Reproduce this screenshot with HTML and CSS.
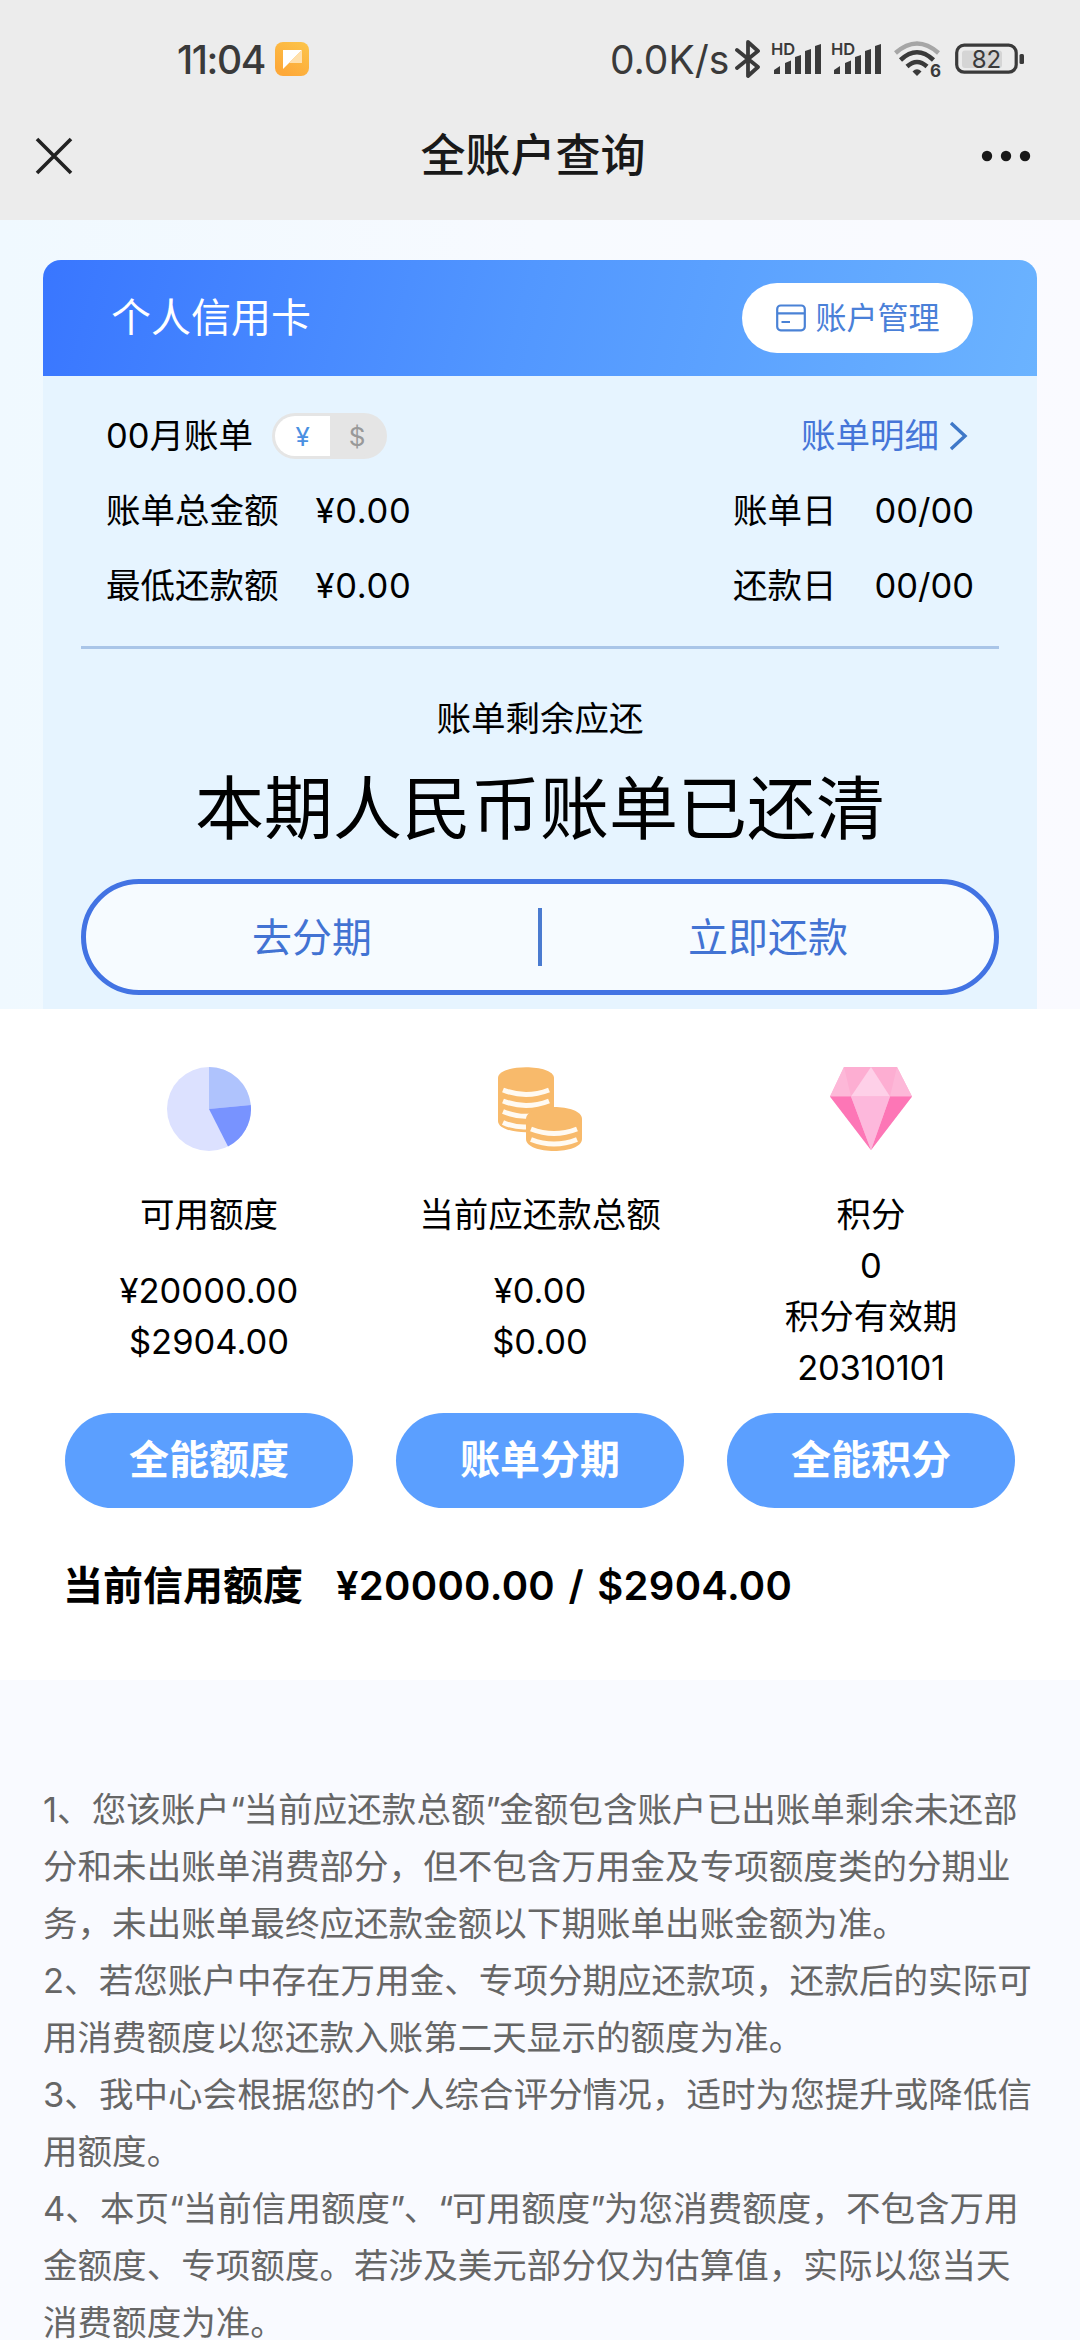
FILE: index.html
```html
<!DOCTYPE html>
<html lang="zh-CN">
<head>
<meta charset="utf-8">
<title>全账户查询</title>
<link rel="stylesheet" href="styles.css">
</head>
<body>
<div class="screen">
  <header class="top">
    <div class="status">
      <div class="status-left">
        <span class="clock">11:04</span>
        <svg class="app-icon" width="34" height="34" viewBox="0 0 34 34">
          <defs><linearGradient id="app" x1="1" y1="0" x2="0.4" y2="1"><stop offset="0" stop-color="#fcc54a"/><stop offset="1" stop-color="#fda838"/></linearGradient></defs>
          <rect width="34" height="34" rx="8" fill="url(#app)"/>
          <path d="M8 8H27L8 27Z" fill="#fff"/>
          <path d="M27 8V21H14Z" fill="#ffe0ac"/>
        </svg>
      </div>
      <div class="status-right">
        <span class="speed">0.0K/s</span>
        <svg class="bt" width="26" height="40" viewBox="0 0 26 40"><path d="M2 11L23 28L13 37V3L23 12L2 29" fill="none" stroke="#3a3a3a" stroke-width="3.8" stroke-linejoin="round" stroke-linecap="round"/></svg>
        <div class="signal"><span class="hd">HD</span><svg width="52" height="34" viewBox="0 0 52 34"><path d="M3 32V28L9 24V32ZM14 32V21L20 18.500V32ZM24 32V15L30 13V32ZM34 32V9L40 7V32ZM44 32V4L50 2V32Z" fill="#3a3a3a"/></svg></div>
        <div class="signal"><span class="hd">HD</span><svg width="52" height="34" viewBox="0 0 52 34"><path d="M3 32V28L9 24V32ZM14 32V21L20 18.500V32ZM24 32V15L30 13V32ZM34 32V9L40 7V32ZM44 32V4L50 2V32Z" fill="#3a3a3a"/></svg></div>
        <div class="wifi"><svg width="48" height="38" viewBox="0 0 48 38"><g fill="none" stroke-width="4.500"><path d="M1.500 13Q23 -6 44.500 13" stroke="#a6a6a6"/><path d="M6.500 20Q23 4.500 39.500 20" stroke="#3a3a3a"/><path d="M13 26.500Q23 17.500 33 26.500" stroke="#3a3a3a"/></g><path d="M18.500 31.500Q23 27 27.500 31.500L23 36Z" fill="#3a3a3a"/></svg><span class="six">6</span></div>
        <svg class="battery" width="70" height="32" viewBox="0 0 70 32"><rect x="1.700" y="2.200" width="59.500" height="27" rx="7.500" fill="none" stroke="#3a3a3a" stroke-width="3.200"/><rect x="7" y="7.500" width="40" height="17.500" rx="3" fill="#d5d5d5"/><rect x="64.500" y="11" width="4.500" height="10" rx="1.500" fill="#3a3a3a"/><text class="pct" x="31.500" y="24.500" text-anchor="middle">82</text></svg>
      </div>
    </div>
    <div class="nav">
      <svg width="38" height="38" viewBox="0 0 38 38"><path d="M2 2L36 36M36 2L2 36" stroke="#222" stroke-width="3.600"/></svg>
      <h1>全账户查询</h1>
      <svg width="50" height="12" viewBox="0 0 50 12"><g fill="#191919"><circle cx="6" cy="6" r="5.200"/><circle cx="25" cy="6" r="5.200"/><circle cx="44" cy="6" r="5.200"/></g></svg>
    </div>
  </header>

  <section class="hero">
    <div class="card">
      <div class="card-head">
        <span class="card-title">个人信用卡</span>
        <div class="manage">
          <svg width="30" height="28" viewBox="0 0 30 28"><g fill="none" stroke="#4a82d6" stroke-width="2.200"><rect x="1.200" y="1.500" width="27.600" height="24.800" rx="3.500"/><path d="M1 9.300H29M5.500 18H14"/></g></svg>
          <span>账户管理</span>
        </div>
      </div>
      <div class="card-body">
        <div class="row">
          <div class="period"><span>00月账单</span><div class="toggle"><span class="on">¥</span><span class="off">$</span></div></div>
          <div class="detail"><span>账单明细</span><svg width="20" height="30" viewBox="0 0 20 30"><path d="M3 2L17 15L3 28" fill="none" stroke="#3f78c8" stroke-width="3.400"/></svg></div>
        </div>
        <div class="row"><div class="pair"><span>账单总金额</span><span class="num">¥0.00</span></div><div class="pair date"><span>账单日</span><span>00/00</span></div></div>
        <div class="row"><div class="pair"><span>最低还款额</span><span class="num">¥0.00</span></div><div class="pair date"><span>还款日</span><span>00/00</span></div></div>
      </div>
      <div class="due">
        <p class="due-label">账单剩余应还</p>
        <p class="due-value">本期人民币账单已还清</p>
        <div class="actions"><span>去分期</span><i></i><span>立即还款</span></div>
      </div>
    </div>
  </section>

  <section class="summary">
    <div class="cols">
      <div class="col">
        <svg width="84" height="84" viewBox="0 0 84 84"><circle cx="42" cy="42" r="42" fill="#dce1ff"/><path d="M42 42V0A42 42 0 0 1 83.800 38Z" fill="#afc3fd"/><path d="M42 42L83.800 38A42 42 0 0 1 61 79.500Z" fill="#7893ff"/></svg>
        <p class="label">可用额度</p>
        <div class="values gap"><p>¥20000.00</p><p>$2904.00</p></div>
        <div class="btn">全能额度</div>
      </div>
      <div class="col">
        <svg width="84" height="84" viewBox="0 0 84 84"><path d="M0 11C0-3.500 56-3.500 56 11V54C56 69 0 69 0 54Z" fill="#f8ba6b"/><g fill="none" stroke="#fffaf2" stroke-width="5"><path d="M5 23Q28 32 51 23M5 34Q28 43 51 34M5 44.500Q20 50.500 32 49M5 55.500Q16 60.500 28 60"/></g><path d="M28 52C28 36 84 36 84 52V72C84 88 28 88 28 72Z" fill="#f8ba6b"/><g fill="none" stroke="#fffaf2" stroke-width="5"><path d="M33 62Q56 71 79 62M33 72.500Q56 81.500 79 72.500"/></g></svg>
        <p class="label">当前应还款总额</p>
        <div class="values gap"><p>¥0.00</p><p>$0.00</p></div>
        <div class="btn">账单分期</div>
      </div>
      <div class="col">
        <svg width="82" height="84" viewBox="0 0 82 84"><path d="M14 0H67L82 29.500L41 83L0 29.500Z" fill="#fdaed2"/><path d="M14 0L21 29.500H0Z" fill="#fdb8d8"/><path d="M67 0L60 29.500H82Z" fill="#fdb8d8"/><path d="M41 0L60 29.500H21Z" fill="#fed0e8"/><path d="M0 29.500H21L41 83Z" fill="#fd76b6"/><path d="M82 29.500H60L41 83Z" fill="#fd76b6"/><path d="M21 29.500H60L41 83Z" fill="#fdb8dc"/></svg>
        <p class="label">积分</p>
        <div class="values"><p>0</p><p>积分有效期</p><p class="expiry">20310101</p></div>
        <div class="btn">全能积分</div>
      </div>
    </div>
    <div class="limit"><span>当前信用额度</span><span class="limit-num">¥20000.00 / $2904.00</span></div>
  </section>

  <section class="notes">
    <p>1、您该账户<q>“</q>当前应还款总额<q>”</q>金额包含账户已出账单剩余未还部<br>分和未出账单消费部分，但不包含万用金及专项额度类的分期业<br>务，未出账单最终应还款金额以下期账单出账金额为准。</p>
    <p>2、若您账户中存在万用金、专项分期应还款项，还款后的实际可<br>用消费额度以您还款入账第二天显示的额度为准。</p>
    <p>3、我中心会根据您的个人综合评分情况，适时为您提升或降低信<br>用额度。</p>
    <p>4、本页<q>“</q>当前信用额度<q>”</q>、<q>“</q>可用额度<q>”</q>为您消费额度，不包含万用<br>金额度、专项额度。若涉及美元部分仅为估算值，实际以您当天<br>消费额度为准。</p>
  </section>
</div>
</body>
</html>
```
FILE: styles.css
```css
* { box-sizing: border-box; margin: 0; padding: 0; }
body { font-family: Inter, "Noto Sans CJK SC", sans-serif; color: #000; background: #f9faff; }
svg { display: block; flex: none; }
.screen { width: 1080px; height: 2340px; overflow: hidden; display: flex; flex-direction: column; font-size: 34.5px; line-height: 51px; white-space: nowrap; }

.top { height: 220px; background: #ececec; flex: none; }
.status { height: 118px; padding: 0 55px 0 177px; display: flex; justify-content: space-between; align-items: center; color: #3a3a3a; font-size: 39px; }
.status-left, .status-right { display: flex; align-items: center; }
.clock { width: 98px; font-weight: 500; letter-spacing: -1.4px; }
.speed { width: 125px; letter-spacing: 0; }
.bt { margin-right: 10px; }
.signal { position: relative; margin-right: 8px; }
.wifi { position: relative; margin: 0 13px 0 3px; }
.hd { position: absolute; left: 0; top: -3px; font-size: 16.5px; line-height: 20px; font-weight: 600; }
.six { position: absolute; left: 36px; top: 21px; font-size: 17px; line-height: 20px; font-weight: 700; }
.pct { font-size: 24px; font-weight: 400; fill: #3a3a3a; }
.nav { height: 75px; padding: 0 49px 0 35px; display: flex; justify-content: space-between; align-items: center; }
.nav h1 { font-size: 45px; font-weight: 500; color: #191919; line-height: 60px; margin-left: 12px; }

.hero { height: 789px; flex: none; padding: 40px 43px 0; background: linear-gradient(90deg, #f0f9ff, #f7faff 50%, #fafaff); }
.card { height: 749px; border-radius: 18px 18px 0 0; overflow: hidden; background: #e6f4ff; }
.card-head { height: 116px; padding: 0 64px 0 68px; display: flex; justify-content: space-between; align-items: center; background: linear-gradient(105deg, #3976ff, #5297ff 48%, #6bb3ff); color: #fff; }
.card-title { font-size: 40px; padding-bottom: 2px; }
.manage { width: 231px; height: 70px; border-radius: 35px; background: #fff; color: #4a80d8; display: flex; justify-content: center; align-items: center; gap: 10px; font-size: 31px; }
.manage span { padding-bottom: 2px; }
.card-body { margin: 0 38px; padding: 22px 25px 0 25px; height: 273px; border-bottom: 3px solid #a9c5e8; }
.row { height: 75px; display: flex; justify-content: space-between; align-items: center; }
.period { display: flex; align-items: center; gap: 19px; }
.toggle { width: 115px; height: 46px; border: 3px solid #e5e5e5; border-radius: 23px; overflow: hidden; background: #e5e5e5; display: flex; font-size: 26px; line-height: 42px; text-align: center; }
.toggle .on { width: 55px; background: #fff; color: #4a90e2; }
.toggle .off { width: 54px; color: #999; }
.detail { display: flex; align-items: center; gap: 9px; color: #4575d8; margin-right: 6px; }
.pair { display: flex; gap: 37px; }
.num { letter-spacing: 0.7px; }
.pair.date { gap: 38px; }

.due { padding: 44px 38px 0; display: flex; flex-direction: column; align-items: center; }
.due-value { font-size: 69px; line-height: 90px; margin: 20px 0 25px; }
.actions { width: 918px; height: 116px; border: 5px solid #4273e3; border-radius: 58px; background: #f6fbff; color: #4273d3; font-size: 40px; display: flex; align-items: center; }
.actions span { flex: 1; text-align: center; }
.actions i { width: 4px; height: 58px; background: #4a7bd0; }

.summary { height: 671px; flex: none; background: #fff; padding: 58px 65px 0; }
.cols { display: grid; grid-template-columns: repeat(3, 288px); gap: 43px; }
.col { display: flex; flex-direction: column; align-items: center; }
.label { margin-top: 38px; }
.values { height: 173px; text-align: center; }
.values.gap { padding-top: 25px; }
.expiry { letter-spacing: -0.3px; }
.btn { width: 288px; height: 95px; border-radius: 48px; background: #5b9fff; color: #fff; font-size: 40px; font-weight: 600; line-height: 94px; text-align: center; }
.limit { margin: 52px 0 0 -2px; display: flex; gap: 33px; font-size: 40px; font-weight: 600; }
.limit-num { letter-spacing: 0.3px; word-spacing: 3px; }

.notes { padding: 101px 43px 0; color: #666; line-height: 57px; letter-spacing: 0.06px; }
.notes q { quotes: none; letter-spacing: -1.5px; }
```
